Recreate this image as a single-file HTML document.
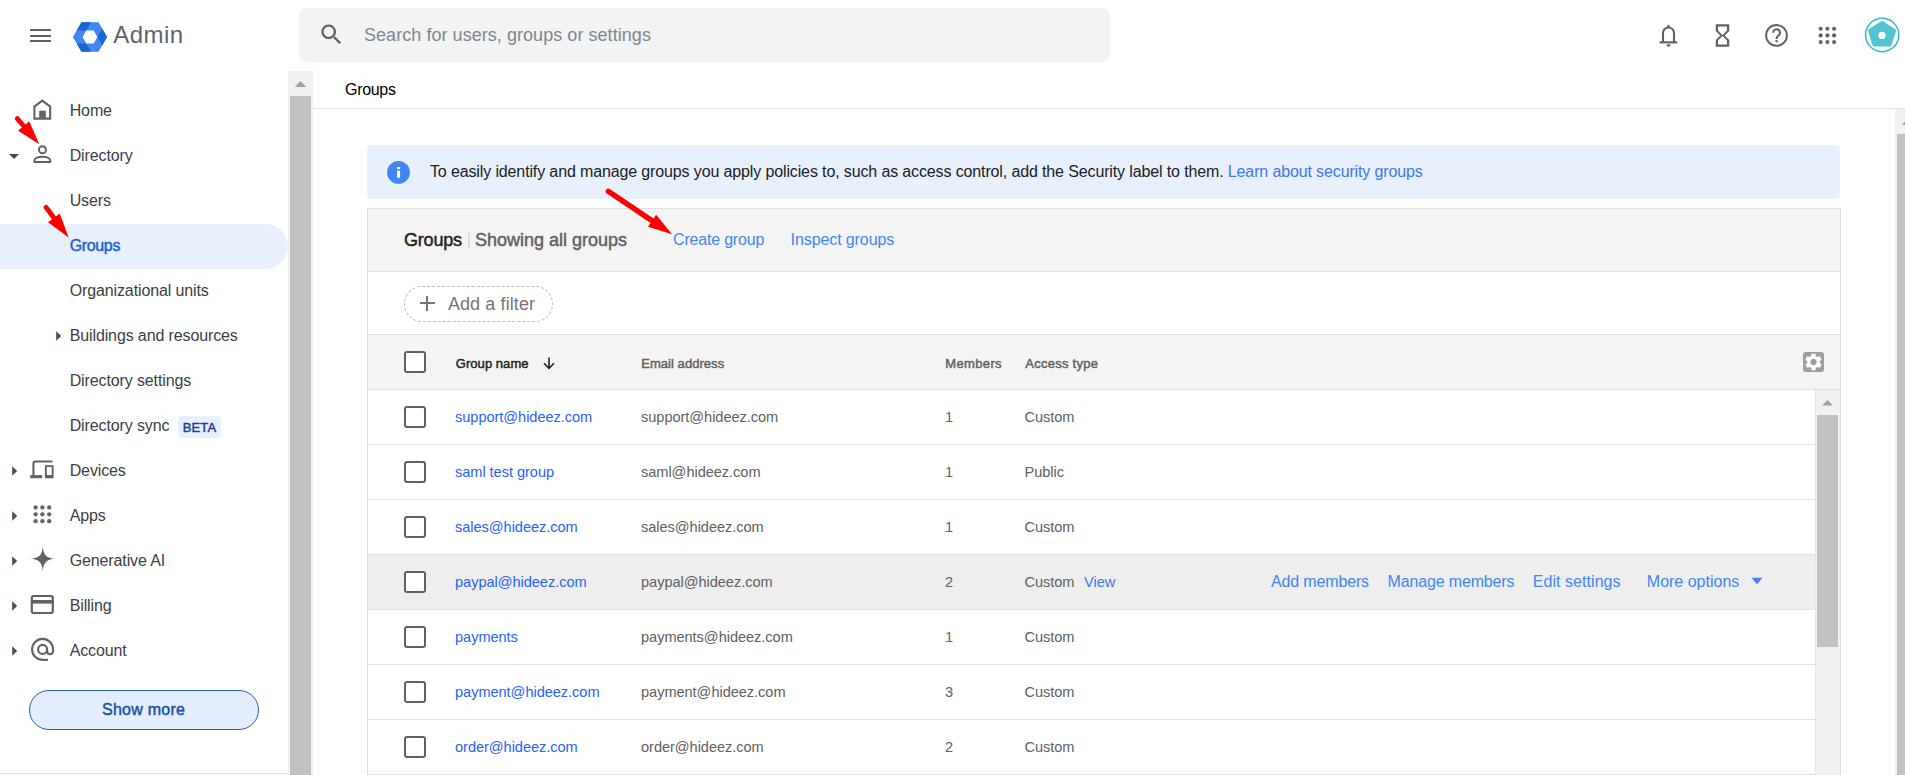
<!DOCTYPE html>
<html><head><meta charset="utf-8"><style>
html,body{margin:0;padding:0;width:1905px;height:775px;overflow:hidden;background:#fff;font-family:"Liberation Sans", sans-serif;}
.t{position:absolute;white-space:nowrap;}
.r{position:absolute;}
</style></head><body>
<div class="r" style="left:30px;top:28.8px;width:21px;height:2.2px;background:#5f6368;"></div>
<div class="r" style="left:30px;top:34.6px;width:21px;height:2.2px;background:#5f6368;"></div>
<div class="r" style="left:30px;top:40.0px;width:21px;height:2.2px;background:#5f6368;"></div>
<svg class="r" style="left:0px;top:0px" width="200" height="70" viewBox="0 0 200 70"><polygon fill="#4285f4" points="107.05,37.00 98.53,51.77 81.48,51.77 72.95,37.00 81.47,22.23 98.53,22.23"/><polygon fill="#1967d2" points="81.47,22.23 91.12,22.23 86.30,30.59 76.65,30.59"/><polygon fill="#1967d2" points="107.05,37.00 102.22,45.36 97.40,37.00 102.22,28.64"/><polygon fill="#1967d2" points="81.48,51.77 76.65,43.41 86.30,43.41 91.13,51.77"/><polygon fill="#fff" points="97.40,37.00 93.70,43.41 86.30,43.41 82.60,37.00 86.30,30.59 93.70,30.59"/></svg>
<div class="t" style="left:113.3px;top:23.38px;font-size:24px;line-height:24px;color:#5f6368;font-weight:normal;letter-spacing:0.45px;">Admin</div>
<div class="r" style="left:299px;top:8px;width:811px;height:54px;background:#f1f3f4;border-radius:8px;"></div>
<svg class="r" style="left:318px;top:21.3px" width="27" height="27" viewBox="0 0 24 24"><path fill="#5f6368" d="M15.5 14h-.79l-.28-.27C15.41 12.59 16 11.11 16 9.5 16 5.91 13.09 3 9.5 3S3 5.91 3 9.5 5.91 16 9.5 16c1.61 0 3.09-.59 4.23-1.57l.27.28v.79l5 4.99L20.49 19l-4.99-5zm-6 0C7.01 14 5 11.99 5 9.5S7.01 5 9.5 5 14 7.01 14 9.5 11.99 14 9.5 14z"/></svg>
<div class="t" style="left:364px;top:26.46px;font-size:18px;line-height:18px;color:#80868b;font-weight:normal;letter-spacing:0.05px;">Search for users, groups or settings</div>
<svg class="r" style="left:1650px;top:15px" width="40" height="40" viewBox="0 0 40 40"><path d="M13 27.3V18 A5.5 5.5 0 0 1 24 18 V27.3" fill="none" stroke="#5f6368" stroke-width="2.1"/><rect x="9.5" y="26.3" width="17.8" height="2.1" fill="#5f6368"/><rect x="17.3" y="9.8" width="2.3" height="3.5" rx="1" fill="#5f6368"/><rect x="16.2" y="28.4" width="4.6" height="1.6" fill="#bdbfc2"/><path d="M16.5 29.8 H20.5 A2 1.9 0 0 1 16.5 29.8Z" fill="#5f6368"/></svg>
<svg class="r" style="left:1709px;top:22px" width="27" height="27" viewBox="0 0 24 24"><path fill="#5f6368" d="M6 2v6h.01L6 8.01 10 12l-4 4 .01.01H6V22h12v-5.99h-.01L18 16l-4-4 4-3.99-.01-.01H18V2H6zm10 14.5V20H8v-3.5l4-4 4 4zm-4-5l-4-4V4h8v3.5l-4 4z"/></svg>
<svg class="r" style="left:1762px;top:21px" width="29" height="29" viewBox="0 0 29 29"><circle cx="14.5" cy="14.4" r="10.4" fill="none" stroke="#5f6368" stroke-width="1.9"/><path d="M11.1 11.7 A3.45 3.4 0 1 1 16.4 14.6 C15.1 15.5 14.6 16.1 14.6 18" fill="none" stroke="#5f6368" stroke-width="2.1"/><rect x="13.5" y="19.1" width="2.2" height="2.1" fill="#5f6368"/></svg>
<svg class="r" style="left:1810px;top:20px" width="30" height="30" viewBox="0 0 30 30"><circle cx="10.700000000000045" cy="8.7" r="2.05" fill="#5f6368"/><circle cx="17.40000000000009" cy="8.7" r="2.05" fill="#5f6368"/><circle cx="24.09999999999991" cy="8.7" r="2.05" fill="#5f6368"/><circle cx="10.700000000000045" cy="15.399999999999999" r="2.05" fill="#5f6368"/><circle cx="17.40000000000009" cy="15.399999999999999" r="2.05" fill="#5f6368"/><circle cx="24.09999999999991" cy="15.399999999999999" r="2.05" fill="#5f6368"/><circle cx="10.700000000000045" cy="22.1" r="2.05" fill="#5f6368"/><circle cx="17.40000000000009" cy="22.1" r="2.05" fill="#5f6368"/><circle cx="24.09999999999991" cy="22.1" r="2.05" fill="#5f6368"/></svg>
<svg class="r" style="left:1860px;top:13px" width="44" height="44" viewBox="0 0 44 44"><circle cx="22.2" cy="22" r="16.65" fill="none" stroke="#34bacb" stroke-width="1.5"/><polygon fill="#52c4d1" stroke="#52c4d1" stroke-width="3" stroke-linejoin="round" points="21.90000000000009,9.600000000000001 34.59999999999991,17.6 30.0,32.0 14.0,32.0 9.5,17.6"/><circle cx="22" cy="22.4" r="3.6" fill="#fff"/></svg>
<div class="r" style="left:0px;top:224px;width:288px;height:45px;background:#e8f0fe;border-radius:0 22.5px 22.5px 0;"></div>
<div class="t" style="left:69.7px;top:103.16px;font-size:16px;line-height:16px;color:#3c4043;font-weight:normal;letter-spacing:-0.12px;">Home</div>
<div class="t" style="left:69.7px;top:148.16px;font-size:16px;line-height:16px;color:#3c4043;font-weight:normal;letter-spacing:-0.12px;">Directory</div>
<div class="t" style="left:69.7px;top:193.16px;font-size:16px;line-height:16px;color:#3c4043;font-weight:normal;letter-spacing:-0.12px;">Users</div>
<div class="t" style="left:69.7px;top:238.16px;font-size:16px;line-height:16px;color:#1a5fd6;font-weight:normal;letter-spacing:-0.35px;-webkit-text-stroke:0.55px #1a5fd6;-webkit-text-stroke:0.45px #1a5fd6;">Groups</div>
<div class="t" style="left:69.7px;top:283.16px;font-size:16px;line-height:16px;color:#3c4043;font-weight:normal;letter-spacing:-0.12px;">Organizational units</div>
<div class="t" style="left:69.7px;top:328.16px;font-size:16px;line-height:16px;color:#3c4043;font-weight:normal;letter-spacing:-0.12px;">Buildings and resources</div>
<div class="t" style="left:69.7px;top:373.16px;font-size:16px;line-height:16px;color:#3c4043;font-weight:normal;letter-spacing:-0.12px;">Directory settings</div>
<div class="t" style="left:69.7px;top:418.16px;font-size:16px;line-height:16px;color:#3c4043;font-weight:normal;letter-spacing:-0.12px;">Directory sync</div>
<div class="t" style="left:69.7px;top:463.16px;font-size:16px;line-height:16px;color:#3c4043;font-weight:normal;letter-spacing:-0.12px;">Devices</div>
<div class="t" style="left:69.7px;top:508.16px;font-size:16px;line-height:16px;color:#3c4043;font-weight:normal;letter-spacing:-0.12px;">Apps</div>
<div class="t" style="left:69.7px;top:553.16px;font-size:16px;line-height:16px;color:#3c4043;font-weight:normal;letter-spacing:-0.12px;">Generative AI</div>
<div class="t" style="left:69.7px;top:598.16px;font-size:16px;line-height:16px;color:#3c4043;font-weight:normal;letter-spacing:-0.12px;">Billing</div>
<div class="t" style="left:69.7px;top:643.16px;font-size:16px;line-height:16px;color:#3c4043;font-weight:normal;letter-spacing:-0.12px;">Account</div>
<div class="r" style="left:178px;top:416px;width:43px;height:21.5px;background:#e8f0fe;border-radius:4px;"></div>
<div class="t" style="left:182.8px;top:420.70px;font-size:13px;line-height:13px;color:#1f3b9e;font-weight:normal;letter-spacing:0.1px;-webkit-text-stroke:0.45px #1f3b9e;">BETA</div>
<svg class="r" style="left:7.8px;top:153.3px" width="12" height="8" viewBox="0 0 12 8"><path d="M1 1 L11 1 L6 6Z" fill="#37474f"/></svg>
<svg class="r" style="left:11px;top:465.4px" width="8" height="12" viewBox="0 0 8 12"><path d="M1.2 1.2 L6.2 6 L1.2 10.8Z" fill="#3d5360"/></svg>
<svg class="r" style="left:11px;top:510.4px" width="8" height="12" viewBox="0 0 8 12"><path d="M1.2 1.2 L6.2 6 L1.2 10.8Z" fill="#3d5360"/></svg>
<svg class="r" style="left:11px;top:555.4px" width="8" height="12" viewBox="0 0 8 12"><path d="M1.2 1.2 L6.2 6 L1.2 10.8Z" fill="#3d5360"/></svg>
<svg class="r" style="left:11px;top:600.4px" width="8" height="12" viewBox="0 0 8 12"><path d="M1.2 1.2 L6.2 6 L1.2 10.8Z" fill="#3d5360"/></svg>
<svg class="r" style="left:11px;top:645.4px" width="8" height="12" viewBox="0 0 8 12"><path d="M1.2 1.2 L6.2 6 L1.2 10.8Z" fill="#3d5360"/></svg>
<svg class="r" style="left:55px;top:330.4px" width="8" height="12" viewBox="0 0 8 12"><path d="M1.2 1.2 L6.2 6 L1.2 10.8Z" fill="#3d5360"/></svg>
<svg class="r" style="left:30px;top:96px" width="26" height="26" viewBox="0 0 26 26"><path d="M4.4 22.6 V10.6 L12.3 4.6 L20.2 10.6 V22.6 Z" fill="none" stroke="#5f6368" stroke-width="2.05" stroke-linejoin="miter"/><rect x="9.2" y="14.7" width="6.6" height="8.4" fill="#5f6368"/></svg>
<svg class="r" style="left:30px;top:141px" width="26" height="26" viewBox="0 0 26 26"><circle cx="12.45" cy="8.7" r="3.5" fill="none" stroke="#5f6368" stroke-width="2"/><path d="M4.4 21.1 V19.6 C4.4 17 8.5 15.7 12.35 15.7 C16.2 15.7 20.3 17 20.3 19.6 V21.1 Z" fill="none" stroke="#5f6368" stroke-width="2" stroke-linejoin="round"/></svg>
<svg class="r" style="left:0px;top:455px" width="60" height="30" viewBox="0 0 60 30"><path d="M33.45 20.5 V8.4 Q33.45 6.45 35.4 6.45 H52.5" fill="none" stroke="#5f6368" stroke-width="2.1"/><rect x="30.2" y="20.1" width="12" height="3.1" fill="#5f6368"/><path fill-rule="evenodd" fill="#5f6368" d="M44.9 10.3 H53.6 V23.2 H44.9Z M46.8 12 V20.1 H51.7 V12Z" transform="translate(0,0)"/></svg>
<svg class="r" style="left:30px;top:500px" width="25" height="25" viewBox="0 0 25 25"><circle cx="5.600000000000001" cy="7.399999999999977" r="2.15" fill="#5f6368"/><circle cx="12.399999999999999" cy="7.399999999999977" r="2.15" fill="#5f6368"/><circle cx="19.200000000000003" cy="7.399999999999977" r="2.15" fill="#5f6368"/><circle cx="5.600000000000001" cy="14.299999999999955" r="2.15" fill="#5f6368"/><circle cx="12.399999999999999" cy="14.299999999999955" r="2.15" fill="#5f6368"/><circle cx="19.200000000000003" cy="14.299999999999955" r="2.15" fill="#5f6368"/><circle cx="5.600000000000001" cy="21.199999999999932" r="2.15" fill="#5f6368"/><circle cx="12.399999999999999" cy="21.199999999999932" r="2.15" fill="#5f6368"/><circle cx="19.200000000000003" cy="21.199999999999932" r="2.15" fill="#5f6368"/></svg>
<svg class="r" style="left:29.5px;top:546.4px" width="26" height="26" viewBox="0 0 26 26"><path d="M12.8 0 C13.4 8.6 15.8 12.2 25.4 12.8 C15.8 13.4 13.4 17 12.8 25.6 C12.2 17 9.8 13.4 0.2 12.8 C9.8 12.2 12.2 8.6 12.8 0Z" fill="#5f6368"/></svg>
<svg class="r" style="left:30px;top:593px" width="26" height="24" viewBox="0 0 26 24"><rect x="1.8" y="3" width="21" height="17" rx="2" fill="none" stroke="#5f6368" stroke-width="2.2"/><rect x="2" y="7" width="21" height="3.6" fill="#5f6368"/></svg>
<svg class="r" style="left:0px;top:630px" width="60" height="40" viewBox="0 0 60 40"><circle cx="42.6" cy="19.4" r="4.5" fill="none" stroke="#5f6368" stroke-width="2.1"/><path d="M47.1 19.4 V21.2 A3 3 0 0 0 53.1 21.2 V19.4 A10.5 10.5 0 1 0 42.6 29.9 H47.9" fill="none" stroke="#5f6368" stroke-width="2.1"/></svg>
<div class="r" style="left:29px;top:690px;width:230px;height:40px;background:#e3edfb;border:1px solid #2a5db0;border-radius:21px;box-sizing:border-box;"></div>
<div class="t" style="left:102px;top:702.16px;font-size:16px;line-height:16px;color:#1d4fa6;font-weight:normal;letter-spacing:0.25px;-webkit-text-stroke:0.45px #1d4fa6;">Show more</div>
<div class="r" style="left:0px;top:773px;width:288px;height:1px;background:#e0e0e0;"></div>
<div class="r" style="left:288px;top:71px;width:25px;height:704px;background:#f1f1f1;"></div>
<svg class="r" style="left:288px;top:71px" width="25" height="25" viewBox="0 0 25 25"><path d="M6.8 16 L12.5 10 L18.2 16Z" fill="#a3a3a3"/></svg>
<div class="r" style="left:290px;top:96px;width:21px;height:679px;background:#c1c1c1;"></div>
<div class="t" style="left:345px;top:82.16px;font-size:16px;line-height:16px;color:#000;font-weight:normal;letter-spacing:-0.3px;">Groups</div>
<div class="r" style="left:313px;top:108px;width:1592px;height:1px;background:#e0e0e0;"></div>
<div class="r" style="left:1895px;top:109px;width:10px;height:666px;background:#f1f1f1;"></div>
<svg class="r" style="left:1895px;top:109px" width="25" height="25" viewBox="0 0 25 25"><path d="M6.8 15.9 L12.5 10 L18.2 15.9Z" fill="#a3a3a3"/></svg>
<div class="r" style="left:1897px;top:134px;width:8px;height:641px;background:#c1c1c1;"></div>
<div class="r" style="left:367px;top:145px;width:1473px;height:53.5px;background:#e8f0fe;border-radius:4px;"></div>
<svg class="r" style="left:386px;top:160px" width="25" height="25" viewBox="0 0 25 25"><circle cx="12.5" cy="12.4" r="11.4" fill="#4285f4"/><rect x="11.1" y="7" width="3" height="2.2" fill="#fff"/><rect x="11.1" y="10.6" width="3" height="7.2" fill="#fff"/></svg>
<div class="t" style="left:430px;top:164.16px;font-size:16px;line-height:16px;color:#202124;font-weight:normal;letter-spacing:-0.13px;">To easily identify and manage groups you apply policies to, such as access control, add the Security label to them. <span style="color:#3f76ef">Learn about security groups</span></div>
<div class="r" style="left:367px;top:208px;width:1474px;height:567px;background:#fff;border:1px solid #e0e0e0;border-bottom:none;box-sizing:border-box;"></div>
<div class="r" style="left:368px;top:209px;width:1472px;height:62px;background:#f4f4f4;"></div>
<div class="r" style="left:367px;top:271px;width:1474px;height:1px;background:#e0e0e0;"></div>
<div class="r" style="left:367px;top:334px;width:1474px;height:1px;background:#e0e0e0;"></div>
<div class="r" style="left:368px;top:335px;width:1472px;height:54px;background:#f4f4f4;"></div>
<div class="r" style="left:367px;top:389px;width:1474px;height:1px;background:#e0e0e0;"></div>
<div class="t" style="left:404px;top:230.56px;font-size:18px;line-height:18px;color:#212121;font-weight:normal;letter-spacing:-0.2px;-webkit-text-stroke:0.45px #212121;">Groups</div>
<div class="r" style="left:468px;top:233px;width:2px;height:15px;background:#dddddd;"></div>
<div class="t" style="left:475px;top:230.56px;font-size:18px;line-height:18px;color:#616161;font-weight:normal;letter-spacing:0px;-webkit-text-stroke:0.45px #616161;">Showing all groups</div>
<div class="t" style="left:673.1px;top:232.26px;font-size:16px;line-height:16px;color:#4285f4;font-weight:normal;letter-spacing:-0.2px;">Create group</div>
<div class="t" style="left:790.6px;top:232.26px;font-size:16px;line-height:16px;color:#4285f4;font-weight:normal;letter-spacing:-0.1px;">Inspect groups</div>
<div class="r" style="left:404px;top:286px;width:149px;height:36px;background:transparent;border:1px dashed #bdbdbd;border-radius:18px;box-sizing:border-box;"></div>
<div class="r" style="left:419.6px;top:302.3px;width:15.6px;height:2.1px;background:#757575;"></div>
<div class="r" style="left:426.4px;top:295.5px;width:2.1px;height:15.7px;background:#757575;"></div>
<div class="t" style="left:447.9px;top:295.46px;font-size:18px;line-height:18px;color:#757575;font-weight:normal;letter-spacing:0.1px;">Add a filter</div>
<div class="r" style="left:404.2px;top:351.2px;width:21.5px;height:21.5px;border:2px solid #616161;border-radius:3px;box-sizing:border-box;background:#fff"></div>
<div class="t" style="left:455.8px;top:356.80px;font-size:13px;line-height:13px;color:#212121;font-weight:normal;letter-spacing:0.05px;-webkit-text-stroke:0.45px #212121;">Group name</div>
<svg class="r" style="left:541px;top:355px" width="16" height="16" viewBox="0 0 16 16"><path d="M8 2.5 V13 M3 8.3 L8 13.3 L13 8.3" fill="none" stroke="#212121" stroke-width="1.6"/></svg>
<div class="t" style="left:641.2px;top:356.80px;font-size:13px;line-height:13px;color:#616161;font-weight:normal;letter-spacing:0.05px;-webkit-text-stroke:0.45px #616161;">Email address</div>
<div class="t" style="left:945.3px;top:356.80px;font-size:13px;line-height:13px;color:#616161;font-weight:normal;letter-spacing:0.35px;-webkit-text-stroke:0.45px #616161;">Members</div>
<div class="t" style="left:1025.3px;top:356.80px;font-size:13px;line-height:13px;color:#616161;font-weight:normal;letter-spacing:0.25px;-webkit-text-stroke:0.45px #616161;">Access type</div>
<svg class="r" style="left:1803px;top:352px" width="21" height="20" viewBox="0 0 21 20"><rect x="0" y="0" width="21" height="20" rx="3" fill="#9e9e9e"/><path fill="#fff" transform="translate(0.06,-0.44) scale(0.87)" d="M19.14 12.94c.04-.3.06-.61.06-.94 0-.32-.02-.64-.07-.94l2.03-1.58c.18-.14.23-.41.12-.61l-1.92-3.32c-.12-.22-.37-.29-.59-.22l-2.39.96c-.5-.38-1.03-.7-1.62-.94l-.36-2.54c-.04-.24-.24-.41-.48-.41h-3.84c-.24 0-.43.17-.47.41l-.36 2.54c-.59.24-1.13.57-1.62.94l-2.39-.96c-.22-.08-.47 0-.59.22L2.74 8.87c-.12.21-.08.47.12.61l2.03 1.58c-.05.3-.09.63-.09.94s.02.64.07.94l-2.03 1.58c-.18.14-.23.41-.12.61l1.92 3.32c.12.22.37.29.59.22l2.39-.96c.5.38 1.03.7 1.62.94l.36 2.54c.05.24.24.41.48.41h3.84c.24 0 .44-.17.47-.41l.36-2.54c.59-.24 1.13-.56 1.62-.94l2.39.96c.22.08.47 0 .59-.22l1.92-3.32c.12-.22.07-.47-.12-.61l-2.01-1.58zM12 15.6c-1.98 0-3.6-1.62-3.6-3.6s1.62-3.6 3.6-3.6 3.6 1.62 3.6 3.6-1.62 3.6-3.6 3.6z"/></svg>
<div class="r" style="left:367px;top:444px;width:1448px;height:1px;background:#e0e0e0;"></div>
<div class="r" style="left:404.2px;top:406.3px;width:21.5px;height:21.5px;border:2px solid #616161;border-radius:3px;box-sizing:border-box;background:#fff"></div>
<div class="t" style="left:455px;top:410.34px;font-size:14.6px;line-height:14.6px;color:#2962ff;font-weight:normal;letter-spacing:-0.05px;">support@hideez.com</div>
<div class="t" style="left:641px;top:410.34px;font-size:14.6px;line-height:14.6px;color:#616161;font-weight:normal;letter-spacing:-0.05px;">support@hideez.com</div>
<div class="t" style="left:945px;top:410.34px;font-size:14.6px;line-height:14.6px;color:#616161;font-weight:normal;letter-spacing:0px;">1</div>
<div class="t" style="left:1024.5px;top:410.34px;font-size:14.6px;line-height:14.6px;color:#616161;font-weight:normal;letter-spacing:-0.05px;">Custom</div>
<div class="r" style="left:367px;top:499px;width:1448px;height:1px;background:#e0e0e0;"></div>
<div class="r" style="left:404.2px;top:461.3px;width:21.5px;height:21.5px;border:2px solid #616161;border-radius:3px;box-sizing:border-box;background:#fff"></div>
<div class="t" style="left:455px;top:465.34px;font-size:14.6px;line-height:14.6px;color:#2962ff;font-weight:normal;letter-spacing:-0.05px;">saml test group</div>
<div class="t" style="left:641px;top:465.34px;font-size:14.6px;line-height:14.6px;color:#616161;font-weight:normal;letter-spacing:-0.05px;">saml@hideez.com</div>
<div class="t" style="left:945px;top:465.34px;font-size:14.6px;line-height:14.6px;color:#616161;font-weight:normal;letter-spacing:0px;">1</div>
<div class="t" style="left:1024.5px;top:465.34px;font-size:14.6px;line-height:14.6px;color:#616161;font-weight:normal;letter-spacing:-0.05px;">Public</div>
<div class="r" style="left:367px;top:554px;width:1448px;height:1px;background:#e0e0e0;"></div>
<div class="r" style="left:404.2px;top:516.3px;width:21.5px;height:21.5px;border:2px solid #616161;border-radius:3px;box-sizing:border-box;background:#fff"></div>
<div class="t" style="left:455px;top:520.34px;font-size:14.6px;line-height:14.6px;color:#2962ff;font-weight:normal;letter-spacing:-0.05px;">sales@hideez.com</div>
<div class="t" style="left:641px;top:520.34px;font-size:14.6px;line-height:14.6px;color:#616161;font-weight:normal;letter-spacing:-0.05px;">sales@hideez.com</div>
<div class="t" style="left:945px;top:520.34px;font-size:14.6px;line-height:14.6px;color:#616161;font-weight:normal;letter-spacing:0px;">1</div>
<div class="t" style="left:1024.5px;top:520.34px;font-size:14.6px;line-height:14.6px;color:#616161;font-weight:normal;letter-spacing:-0.05px;">Custom</div>
<div class="r" style="left:368px;top:555px;width:1447px;height:54px;background:#eeeeee;"></div>
<div class="r" style="left:367px;top:609px;width:1448px;height:1px;background:#e0e0e0;"></div>
<div class="r" style="left:404.2px;top:571.3px;width:21.5px;height:21.5px;border:2px solid #616161;border-radius:3px;box-sizing:border-box;background:#fff"></div>
<div class="t" style="left:455px;top:575.34px;font-size:14.6px;line-height:14.6px;color:#2962ff;font-weight:normal;letter-spacing:-0.05px;">paypal@hideez.com</div>
<div class="t" style="left:641px;top:575.34px;font-size:14.6px;line-height:14.6px;color:#616161;font-weight:normal;letter-spacing:-0.05px;">paypal@hideez.com</div>
<div class="t" style="left:945px;top:575.34px;font-size:14.6px;line-height:14.6px;color:#616161;font-weight:normal;letter-spacing:0px;">2</div>
<div class="t" style="left:1024.5px;top:575.34px;font-size:14.6px;line-height:14.6px;color:#616161;font-weight:normal;letter-spacing:-0.05px;">Custom</div>
<div class="t" style="left:1084px;top:575.34px;font-size:14.6px;line-height:14.6px;color:#3b78e7;font-weight:normal;letter-spacing:0px;">View</div>
<div class="t" style="left:1271px;top:574.16px;font-size:16px;line-height:16px;color:#4285f4;font-weight:normal;letter-spacing:-0.15px;">Add members</div>
<div class="t" style="left:1387.5px;top:574.16px;font-size:16px;line-height:16px;color:#4285f4;font-weight:normal;letter-spacing:-0.15px;">Manage members</div>
<div class="t" style="left:1532.8px;top:574.16px;font-size:16px;line-height:16px;color:#4285f4;font-weight:normal;letter-spacing:0.05px;">Edit settings</div>
<div class="t" style="left:1646.8px;top:574.16px;font-size:16px;line-height:16px;color:#4285f4;font-weight:normal;letter-spacing:0.0px;">More options</div>
<svg class="r" style="left:1749.5px;top:577px" width="14" height="10" viewBox="0 0 14 10"><path d="M1.4 0.8 L12.6 0.8 L7 7.2Z" fill="#4285f4"/></svg>
<div class="r" style="left:367px;top:664px;width:1448px;height:1px;background:#e0e0e0;"></div>
<div class="r" style="left:404.2px;top:626.3px;width:21.5px;height:21.5px;border:2px solid #616161;border-radius:3px;box-sizing:border-box;background:#fff"></div>
<div class="t" style="left:455px;top:630.34px;font-size:14.6px;line-height:14.6px;color:#2962ff;font-weight:normal;letter-spacing:-0.05px;">payments</div>
<div class="t" style="left:641px;top:630.34px;font-size:14.6px;line-height:14.6px;color:#616161;font-weight:normal;letter-spacing:-0.05px;">payments@hideez.com</div>
<div class="t" style="left:945px;top:630.34px;font-size:14.6px;line-height:14.6px;color:#616161;font-weight:normal;letter-spacing:0px;">1</div>
<div class="t" style="left:1024.5px;top:630.34px;font-size:14.6px;line-height:14.6px;color:#616161;font-weight:normal;letter-spacing:-0.05px;">Custom</div>
<div class="r" style="left:367px;top:719px;width:1448px;height:1px;background:#e0e0e0;"></div>
<div class="r" style="left:404.2px;top:681.3px;width:21.5px;height:21.5px;border:2px solid #616161;border-radius:3px;box-sizing:border-box;background:#fff"></div>
<div class="t" style="left:455px;top:685.34px;font-size:14.6px;line-height:14.6px;color:#2962ff;font-weight:normal;letter-spacing:-0.05px;">payment@hideez.com</div>
<div class="t" style="left:641px;top:685.34px;font-size:14.6px;line-height:14.6px;color:#616161;font-weight:normal;letter-spacing:-0.05px;">payment@hideez.com</div>
<div class="t" style="left:945px;top:685.34px;font-size:14.6px;line-height:14.6px;color:#616161;font-weight:normal;letter-spacing:0px;">3</div>
<div class="t" style="left:1024.5px;top:685.34px;font-size:14.6px;line-height:14.6px;color:#616161;font-weight:normal;letter-spacing:-0.05px;">Custom</div>
<div class="r" style="left:367px;top:774px;width:1448px;height:1px;background:#e0e0e0;"></div>
<div class="r" style="left:404.2px;top:736.3px;width:21.5px;height:21.5px;border:2px solid #616161;border-radius:3px;box-sizing:border-box;background:#fff"></div>
<div class="t" style="left:455px;top:740.34px;font-size:14.6px;line-height:14.6px;color:#2962ff;font-weight:normal;letter-spacing:-0.05px;">order@hideez.com</div>
<div class="t" style="left:641px;top:740.34px;font-size:14.6px;line-height:14.6px;color:#616161;font-weight:normal;letter-spacing:-0.05px;">order@hideez.com</div>
<div class="t" style="left:945px;top:740.34px;font-size:14.6px;line-height:14.6px;color:#616161;font-weight:normal;letter-spacing:0px;">2</div>
<div class="t" style="left:1024.5px;top:740.34px;font-size:14.6px;line-height:14.6px;color:#616161;font-weight:normal;letter-spacing:-0.05px;">Custom</div>
<div class="r" style="left:1815px;top:390px;width:25px;height:385px;background:#f1f1f1;border-left:1px solid #e6e6e6;box-sizing:border-box;"></div>
<svg class="r" style="left:1815px;top:390px" width="25" height="25" viewBox="0 0 25 25"><path d="M7 15.5 L12.5 10 L18 15.5Z" fill="#a3a3a3"/></svg>
<div class="r" style="left:1817px;top:415px;width:21px;height:232px;background:#c1c1c1;"></div>
<svg class="r" style="left:0;top:0" width="1905" height="775"><line x1="17.3" y1="118.6" x2="26.26" y2="129.03" stroke="#ff0000" stroke-width="4.8" stroke-linecap="round"/><polygon fill="#ff0000" points="39.3,144.2 18.12,130.76 29.19,121.24"/></svg>
<svg class="r" style="left:0;top:0" width="1905" height="775"><line x1="46" y1="207.3" x2="56.29" y2="221.01" stroke="#ff0000" stroke-width="4.8" stroke-linecap="round"/><polygon fill="#ff0000" points="68.6,237.4 48.01,222.22 59.77,213.39"/></svg>
<svg class="r" style="left:0;top:0" width="1905" height="775"><line x1="608.3" y1="191.3" x2="655.41" y2="223.03" stroke="#ff0000" stroke-width="5.4" stroke-linecap="round"/><polygon fill="#ff0000" points="672,234.2 648.04,226.81 656.14,214.78"/></svg>
</body></html>
